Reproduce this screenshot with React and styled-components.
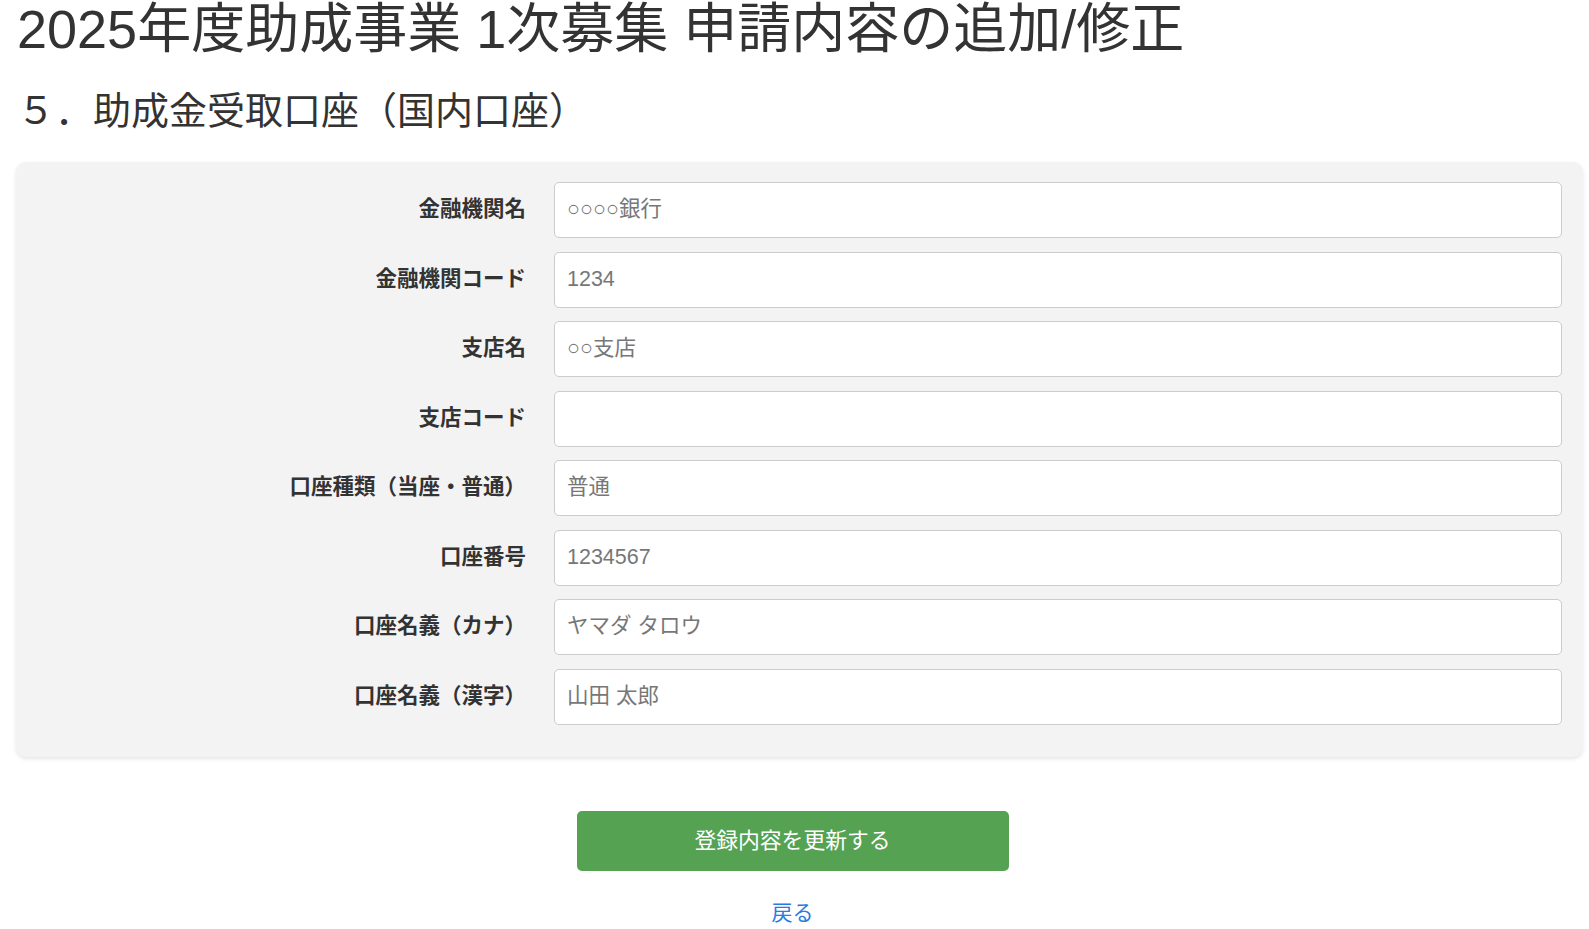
import React from "react";
import styled, { createGlobalStyle } from "styled-components";

const Global = createGlobalStyle`
  html, body { margin: 0; padding: 0; background: #fff; }
  body { font-family: "Liberation Sans", "Noto Sans CJK JP", sans-serif; color: #333; }
  * { box-sizing: border-box; }
`;

const Page = styled.div`
  padding: 0;
`;

const Title = styled.h1`
  margin: 0 0 0 17px;
  font-size: 54px;
  font-weight: 400;
  line-height: 58px;
  color: #333;
`;

const Subtitle = styled.h2`
  margin: 30px 0 0 17px;
  font-size: 38px;
  font-weight: 400;
  line-height: 46px;
  color: #333;
`;

const Panel = styled.div`
  margin: 28px 6px 0 16px;
  background: #f3f3f3;
  border-radius: 10px;
  box-shadow: 0 2px 4px rgba(0, 0, 0, 0.1);
  padding: 20px 21px 32px 0;
  display: flex;
  flex-direction: column;
  gap: 13.5px;
`;

const Row = styled.div`
  display: grid;
  grid-template-columns: 510px 1fr;
  column-gap: 28px;
  align-items: center;
`;

const Label = styled.label`
  text-align: right;
  font-weight: 700;
  font-size: 21.5px;
  color: #333;
  padding-bottom: 7px;
`;

const Input = styled.input`
  height: 56px;
  width: 100%;
  border: 1px solid #ccc;
  border-radius: 5px;
  background: #fff;
  padding: 0 12px 1px;
  font-family: "Liberation Sans", "Noto Sans CJK JP", sans-serif;
  font-size: 21.5px;
  color: #333;
  outline: none;
  &::placeholder { color: #777; }
`;

const Actions = styled.div`
  margin-top: 54px;
  padding-right: 4px;
  display: flex;
  flex-direction: column;
  align-items: center;
`;

const Submit = styled.button`
  width: 432px;
  height: 60px;
  border: none;
  border-radius: 5px;
  background: #56a253;
  color: #fff;
  font-family: "Liberation Sans", "Noto Sans CJK JP", sans-serif;
  font-size: 21.8px;
  padding: 0 0 5px;
  cursor: pointer;
`;

const Back = styled.a`
  margin-top: 28px;
  color: #2a7ae2;
  font-size: 21px;
  text-decoration: none;
  line-height: 28px;
`;

const fields = [
  ["金融機関名", "○○○○銀行"],
  ["金融機関コード", "1234"],
  ["支店名", "○○支店"],
  ["支店コード", ""],
  ["口座種類（当座・普通）", "普通"],
  ["口座番号", "1234567"],
  ["口座名義（カナ）", "ヤマダ タロウ"],
  ["口座名義（漢字）", "山田 太郎"],
];

export default function App() {
  return (
    <Page>
      <Global />
      <Title>2025年度助成事業 1次募集 申請内容の追加/修正</Title>
      <Subtitle>５．助成金受取口座（国内口座）</Subtitle>
      <Panel>
        {fields.map(([label, ph]) => (
          <Row key={label}>
            <Label>{label}</Label>
            <Input placeholder={ph} />
          </Row>
        ))}
      </Panel>
      <Actions>
        <Submit>登録内容を更新する</Submit>
        <Back href="#">戻る</Back>
      </Actions>
    </Page>
  );
}
